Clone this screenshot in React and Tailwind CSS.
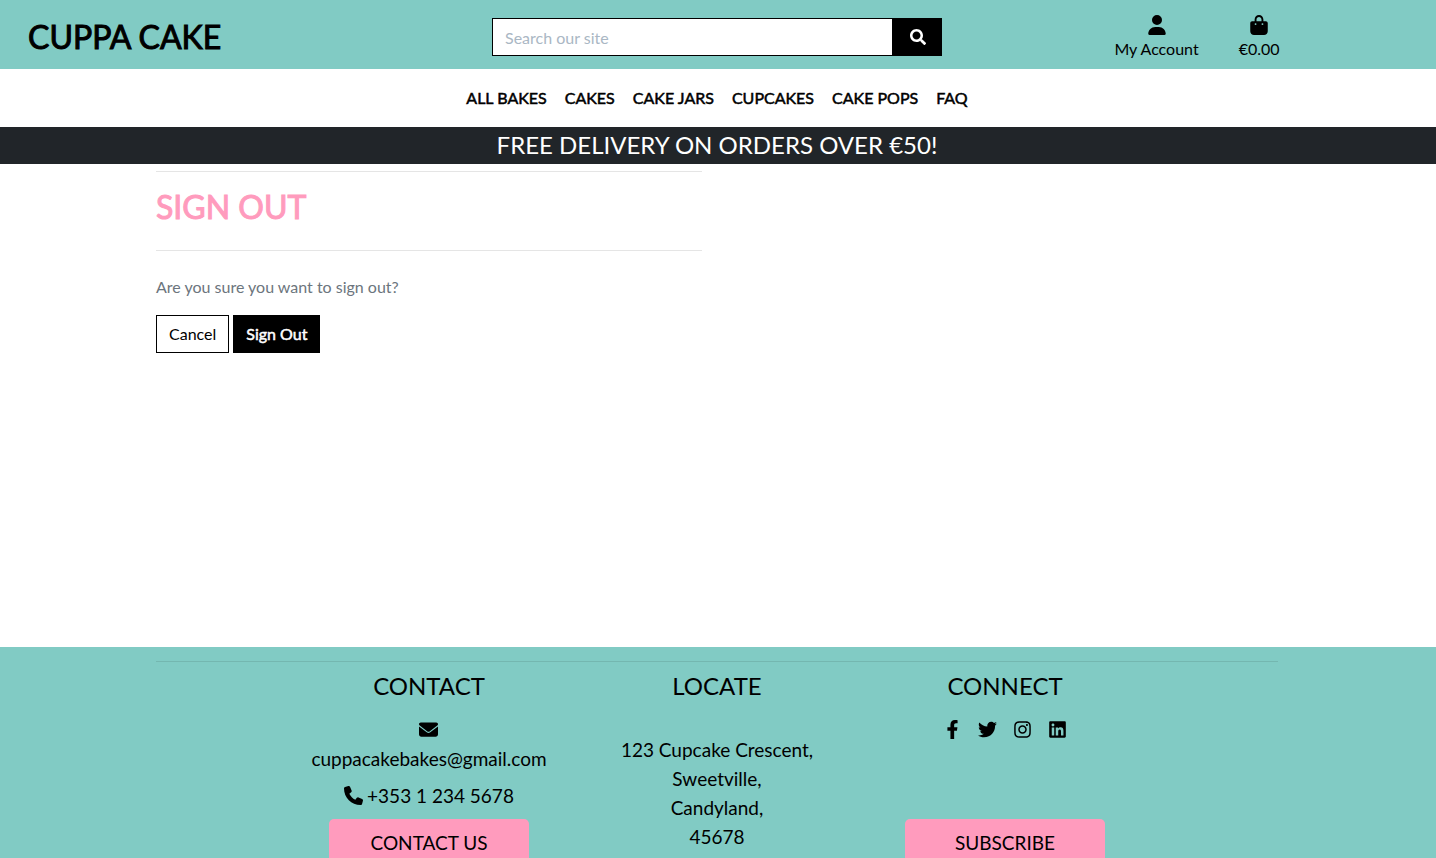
import { FaFacebookF, FaInstagram, FaLinkedin, FaSearch, FaTwitter } from "react-icons/fa";
import { FaBagShopping, FaEnvelope, FaPhone, FaUser } from "react-icons/fa6";

const navItems = ["All Bakes", "Cakes", "Cake Jars", "Cupcakes", "Cake Pops", "FAQ"];

const socials = [
  { name: "Facebook", Icon: FaFacebookF },
  { name: "Twitter", Icon: FaTwitter },
  { name: "Instagram", Icon: FaInstagram },
  { name: "LinkedIn", Icon: FaLinkedin },
];

function Header() {
  return (
    <header className="grid h-[69px] grid-cols-3 items-center bg-[#81cbc4] pr-0.5">
      <a href="#" className="pl-7 pt-1 text-[32px] leading-10 whitespace-nowrap [-webkit-text-stroke:1px_currentColor]">
        CUPPA CAKE
      </a>
      <form className="mt-1 flex h-[38px] w-full max-w-[450px] justify-self-center" onSubmit={(e) => e.preventDefault()}>
        <input
          type="text"
          aria-label="Search our site"
          placeholder="Search our site"
          className="min-w-0 flex-1 border border-black bg-white px-3 pt-0.5 text-base outline-none placeholder:text-[#aab7c4]"
        />
        <button type="submit" aria-label="Search" className="flex w-[49px] items-center justify-center bg-black text-white">
          <FaSearch className="size-4" />
        </button>
      </form>
      <ul className="flex justify-center gap-10 pt-1.5 pl-1 text-base leading-6">
        <li>
          <a href="#" className="flex flex-col items-center gap-0.5">
            <FaUser className="size-5" />
            <span>My Account</span>
          </a>
        </li>
        <li>
          <a href="#" className="flex flex-col items-center gap-0.5">
            <FaBagShopping className="size-5" />
            <span>€0.00</span>
          </a>
        </li>
      </ul>
    </header>
  );
}

function FooterHeading({ children }) {
  return <h2 className="text-2xl leading-8">{children}</h2>;
}

export default function App() {
  return (
    <div className="flex min-h-screen flex-col bg-white font-['Lato',sans-serif] text-black">
      <Header />
      <nav className="flex h-[58px] items-center justify-center gap-[18px] pr-0.5 text-base uppercase [-webkit-text-stroke:0.5px_currentColor]">
        {navItems.map((item) => (
          <a key={item} href="#">
            {item}
          </a>
        ))}
      </nav>
      <p className="bg-[#212529] pr-0.5 pb-0.5 text-center text-2xl leading-[35px] text-white">
        FREE DELIVERY ON ORDERS OVER €50!
      </p>
      <main className="min-h-[483px] pr-0.5">
        <div className="mx-auto max-w-[1122px] pt-[7px]">
          <div className="w-1/2 pr-[15px]">
            <hr className="border-[#e5e5e5]" />
            <h1 className="pt-[15px] pb-[23px] text-[32px] leading-10 text-[#ff9bbd] [-webkit-text-stroke:1px_currentColor]">
              SIGN OUT
            </h1>
            <hr className="border-[#e5e5e5]" />
            <p className="mt-6 text-base leading-6 text-[#6c757d]">Are you sure you want to sign out?</p>
            <form className="mt-4 flex gap-1" onSubmit={(e) => e.preventDefault()}>
              <a href="#" className="border border-black px-3 py-1.5 text-base leading-6">
                Cancel
              </a>
              <button
                type="submit"
                className="border border-black bg-black px-3 py-1.5 text-base leading-6 text-white [-webkit-text-stroke:0.5px_currentColor]"
              >
                Sign Out
              </button>
            </form>
          </div>
        </div>
      </main>
      <footer className="flex-1 bg-[#81cbc4] pt-3.5 pr-0.5">
        <hr className="mx-auto max-w-[1122px] border-[#74b7b0]" />
        <div className="mx-auto grid max-w-[864px] grid-cols-3 pt-2 text-center text-[19px] leading-[29px]">
          <section className="flex flex-col items-center">
            <FooterHeading>CONTACT</FooterHeading>
            <a href="#" className="mt-[13px] flex flex-col items-center">
              <span className="flex h-[29px] items-center">
                <FaEnvelope className="size-[19px]" />
              </span>
              cuppacakebakes@gmail.com
            </a>
            <a href="#" className="mt-2 flex items-center gap-1">
              <FaPhone className="size-[19px]" />
              +353 1 234 5678
            </a>
            <a href="#" className="mt-[9px] w-[200px] rounded-[5px] bg-[#ff9bbd] pt-[9px] pb-2.5">
              CONTACT US
            </a>
          </section>
          <section className="flex flex-col items-center">
            <FooterHeading>LOCATE</FooterHeading>
            <address className="mt-[33px] not-italic">
              123 Cupcake Crescent,
              <br />
              Sweetville,
              <br />
              Candyland,
              <br />
              45678
            </address>
          </section>
          <section className="flex flex-col items-center">
            <FooterHeading>CONNECT</FooterHeading>
            <ul className="mt-[13px] flex h-[29px] items-center gap-4">
              {socials.map(({ name, Icon }) => (
                <li key={name}>
                  <a href="#" aria-label={name}>
                    <Icon className="size-[19px] w-auto" />
                  </a>
                </li>
              ))}
            </ul>
            <a href="#" className="mt-auto w-[200px] rounded-[5px] bg-[#ff9bbd] pt-[9px] pb-2.5">
              SUBSCRIBE
            </a>
          </section>
        </div>
      </footer>
    </div>
  );
}
